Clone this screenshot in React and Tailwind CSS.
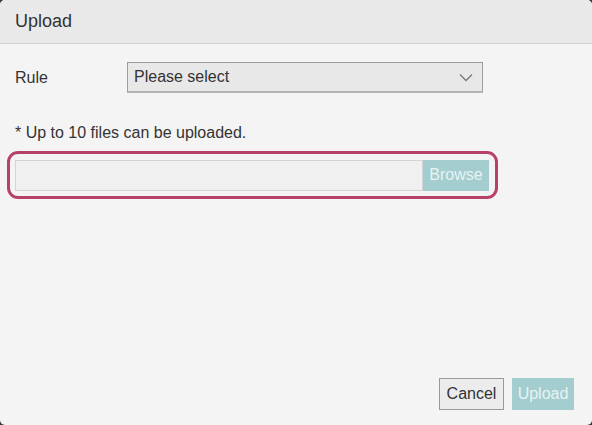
import React from 'react'

export default function App() {
  return (
    <div className="w-[592px] h-[425px] bg-[#3a3a3a] font-['Liberation_Sans',Arial,sans-serif] text-[#333]">
      <div className="w-full h-full bg-[#f4f4f4] rounded-[5px] overflow-hidden flex flex-col">
        {/* Header */}
        <div className="h-[44px] flex-shrink-0 bg-[#e9e9e9] border-b border-[#cfcfcf] flex items-center px-[15px]">
          <span className="text-[18px] text-[#333]">Upload</span>
        </div>

        {/* Body */}
        <div className="flex-1 flex flex-col px-[15px]">
          <div className="flex items-center mt-[18px]">
            <span className="w-[112px] text-[16px]">Rule</span>
            <div className="w-[356px] h-[31px] bg-[#e8e8e8] border border-[#9c9c9c] border-b-2 border-b-[#b4b4b4] flex items-center justify-between pl-[6px] pr-[9px]">
              <span className="text-[16px] text-[#333]">Please select</span>
              <svg width="14" height="9" viewBox="0 0 14 9" fill="none" stroke="#777" strokeWidth="1.3">
                <path d="M1 1.5 L7 7.5 L13 1.5" />
              </svg>
            </div>
          </div>

          <p className="text-[16px] mt-[31px] leading-[18px]">* Up to 10 files can be uploaded.</p>

          <div className="mt-[9px] -ml-[8px] w-[491px] h-[48px] border-[3px] border-[#b8416b] rounded-[11px] flex items-center pl-[5px]">
            <div className="w-[408px] h-[31px] bg-[#f0f0f0] border border-[#d4d4d4]" />
            <div className="w-[66px] h-[31px] bg-[#a4cdd0] flex items-center justify-center">
              <span className="text-[16px] text-[#e8f3f3]">Browse</span>
            </div>
          </div>

          <div className="flex-1" />

          {/* Footer */}
          <div className="flex justify-end items-center gap-[8px] mb-[15px] pr-[3px]">
            <button className="w-[65px] h-[32px] bg-[#ececec] border border-[#9a9a9a] text-[16px] text-[#333]">Cancel</button>
            <button className="w-[62px] h-[32px] bg-[#a4cdd0] text-[16px] text-[#e8f3f3]">Upload</button>
          </div>
        </div>
      </div>
    </div>
  )
}
